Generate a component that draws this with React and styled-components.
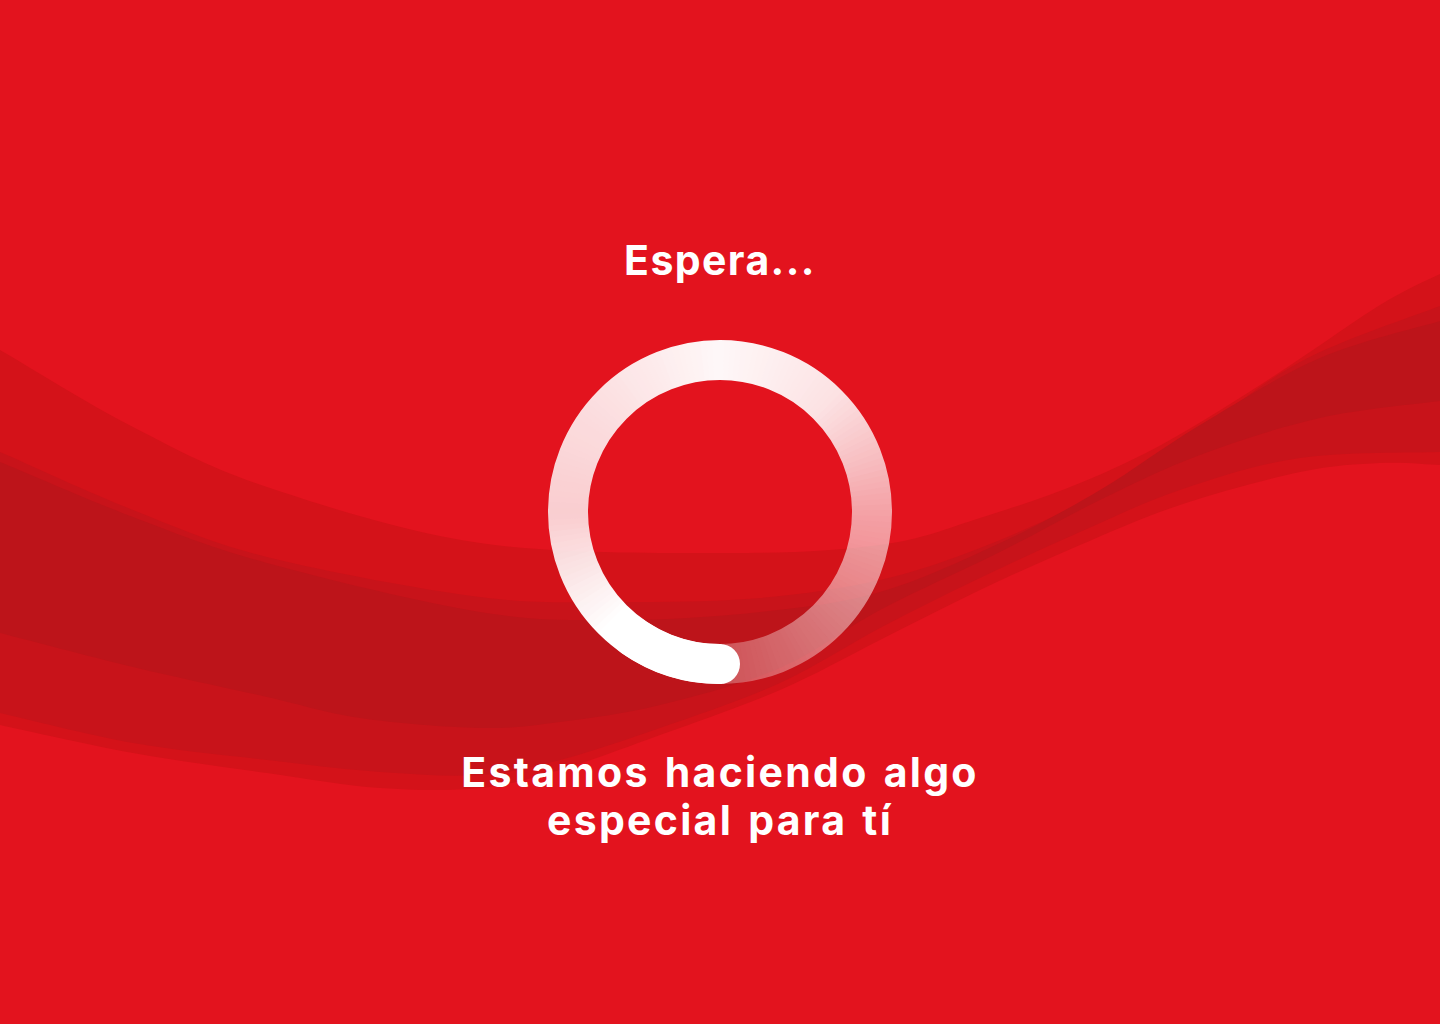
import React from "react";
import styled, { createGlobalStyle } from "styled-components";

const GlobalStyle = createGlobalStyle`
  html, body { margin: 0; padding: 0; }
  body { background: #e3131e; }
  #root { min-height: 100vh; }
`;

const Page = styled.main`
  position: relative;
  width: 100%;
  min-height: 100vh;
  background: #e3131e;
  overflow: hidden;
  font-family: Inter, "Noto Sans", "Liberation Sans", sans-serif;
`;

const Waves = styled.svg`
  position: absolute;
  inset: 0;
  width: 100%;
  height: 100%;
  display: block;
`;

const Content = styled.section`
  position: relative;
  display: flex;
  flex-direction: column;
  align-items: center;
  padding-top: 236px;
`;

const Title = styled.h1`
  margin: 0;
  color: #ffffff;
  font-size: 41px;
  line-height: 48px;
  font-weight: 700;
  letter-spacing: 1.4px;
`;

const Spinner = styled.svg`
  display: block;
  margin-top: 48px;
  width: 360px;
  height: 360px;
`;

const Message = styled.p`
  margin: 56px 0 0;
  color: #ffffff;
  font-size: 41px;
  line-height: 48px;
  font-weight: 700;
  text-align: center;
  letter-spacing: 2.3px;
  word-spacing: 3px;
`;

const seg = (pts, start) => {
  const P = [pts[0], ...pts, pts[pts.length - 1]];
  let d = `${start}${pts[0][0]},${pts[0][1]}`;
  for (let i = 1; i < P.length - 2; i++) {
    const p0 = P[i - 1], p1 = P[i], p2 = P[i + 1], p3 = P[i + 2];
    const c1 = [p1[0] + (p2[0] - p0[0]) / 6, p1[1] + (p2[1] - p0[1]) / 6];
    const c2 = [p2[0] - (p3[0] - p1[0]) / 6, p2[1] - (p3[1] - p1[1]) / 6];
    d += ` C${c1[0].toFixed(1)},${c1[1].toFixed(1)} ${c2[0].toFixed(1)},${c2[1].toFixed(1)} ${p2[0]},${p2[1]}`;
  }
  return d;
};

const band = (top, bottom) =>
  `${seg(top, "M")} ${seg([...bottom].reverse(), "L")} Z`;

const T1 = [[-20,340],[0,350],[133,427],[267,487],[480,543],[720,553],[880,545],[980,518],[1080,483],[1170,440],[1280,372],[1380,305],[1440,274],[1460,266]];
const B1 = [[-20,720],[0,725],[133,753],[267,773],[380,788],[480,788],[560,770],[660,735],[780,690],[880,640],[980,590],[1080,545],[1180,505],[1300,472],[1380,463],[1440,465],[1460,466]];

const T2 = [[-20,445],[0,452],[133,510],[267,557],[480,597],[620,602],[760,598],[880,580],[980,548],[1080,503],[1180,445],[1300,362],[1440,306],[1460,300]];
const B2 = [[-20,708],[0,713],[133,743],[267,760],[380,772],[480,775],[560,760],[660,728],[780,683],[880,628],[980,578],[1080,532],[1180,490],[1300,458],[1440,452],[1460,452]];

const T3 = [[-20,455],[0,462],[133,517],[267,563],[480,612],[620,620],[760,612],[880,592],[1000,543],[1100,490],[1200,425],[1320,358],[1440,321],[1460,316]];
const B3 = [[-20,628],[0,633],[133,667],[267,697],[360,718],[480,728],[560,722],[660,705],[780,668],[880,610],[1000,552],[1100,500],[1200,455],[1320,418],[1440,401],[1460,400]];

const layers = [
  { d: band(T1, B1), fill: "#d41219" },
  { d: band(T2, B2), fill: "#c8131a" },
  { d: band(T3, B3), fill: "#bd141a" },
];

const CX = 180, CY = 180, R = 152;
const pt = (deg, r = R) => {
  const a = (deg * Math.PI) / 180;
  return [CX + r * Math.cos(a), CY + r * Math.sin(a)];
};
const arc = (from, to) => {
  const [x1, y1] = pt(from);
  const [x2, y2] = pt(to);
  const large = Math.abs(to - from) > 180 ? 1 : 0;
  const sweep = to > from ? 1 : 0;
  return `M${x1.toFixed(2)},${y1.toFixed(2)} A${R},${R} 0 ${large} ${sweep} ${x2.toFixed(2)},${y2.toFixed(2)}`;
};

// opacity of the ring's tail, by angle measured clockwise from 12 o'clock
const stops = [
  [0, 0.97], [45, 0.88], [90, 0.61], [135, 0.43], [179.9, 0.27],
  [180, 1], [225, 1], [270, 0.79], [315, 0.87], [360, 0.97],
];
const fadeAt = (t) => {
  for (let i = 0; i < stops.length - 1; i++) {
    const [a0, v0] = stops[i];
    const [a1, v1] = stops[i + 1];
    if (t >= a0 && t <= a1) return v0 + ((v1 - v0) * (t - a0)) / (a1 - a0 || 1);
  }
  return 1;
};
const STEP = 2;
const wedges = Array.from({ length: 360 / STEP }, (_, i) => {
  const t = i * STEP;
  const a0 = t - 90 - 0.6;
  const a1 = t + STEP - 90 + 0.6;
  const [x0, y0] = pt(a0, 200);
  const [x1, y1] = pt(a1, 200);
  const v = Math.round(fadeAt(t + STEP / 2) * 255);
  return {
    points: `${CX},${CY} ${x0.toFixed(2)},${y0.toFixed(2)} ${x1.toFixed(2)},${y1.toFixed(2)}`,
    fill: `rgb(${v},${v},${v})`,
  };
});

export default function App() {
  return (
    <>
      <GlobalStyle />
      <Page>
        <Waves viewBox="0 0 1440 1024" preserveAspectRatio="none" aria-hidden="true">
          {layers.map((l, i) => (
            <path key={i} d={l.d} fill={l.fill} />
          ))}
        </Waves>
        <Content>
          <Title>Espera...</Title>
          <Spinner viewBox="0 0 360 360" aria-label="Cargando">
            <defs>
              <mask id="ringFade" maskUnits="userSpaceOnUse" x="0" y="0" width="360" height="360">
                {wedges.map((w, i) => (
                  <polygon key={i} points={w.points} fill={w.fill} />
                ))}
              </mask>
            </defs>
            <circle cx={CX} cy={CY} r={R} fill="none" stroke="#ffffff" strokeWidth="40" mask="url(#ringFade)" />
            <path d={arc(125, 90)} fill="none" stroke="#ffffff" strokeWidth="40" strokeLinecap="round" />
          </Spinner>
          <Message>
            Estamos haciendo algo
            <br />
            especial para tí
          </Message>
        </Content>
      </Page>
    </>
  );
}
